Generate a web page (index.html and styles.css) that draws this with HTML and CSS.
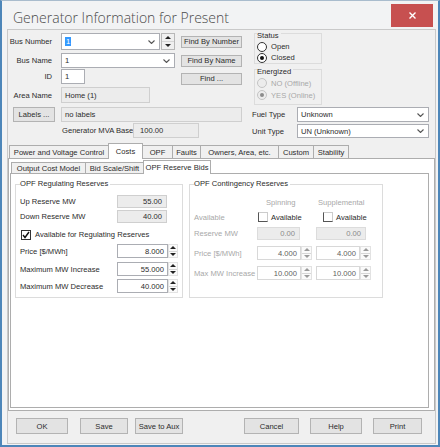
FILE: index.html
```html
<!DOCTYPE html>
<html lang="en">

<head>
  <meta charset="UTF-8">
  <title>Generator Information for Present</title>
  <link rel="stylesheet" href="styles.css">
</head>

<body>
  <div class="window">
    <div class="titlebar">
      <div class="title">Generator Information for Present</div>
      <div class="close">
        <svg width="7" height="7" viewBox="0 0 7 7"><path d="M0.5 0.5 L6.5 6.5 M6.5 0.5 L0.5 6.5" /></svg>
      </div>
    </div>

    <div class="client">
      <!-- bus selection and status -->
      <div class="top">
        <div class="bus-col">
          <div class="row row-num">
            <span class="lbl">Bus Number</span>
            <div class="combo combo-num">
              <span class="val"><span class="sel">1</span></span>
              <svg class="chev" width="7" height="4" viewBox="0 0 7 4"><polyline points="0.5,0.5 3.5,3.5 6.5,0.5" /></svg>
            </div>
            <div class="updown updown-num"><span class="up"></span><span class="down"></span></div>
            <div class="btn btn-find">Find By Number</div>
          </div>
          <div class="row row-name">
            <span class="lbl">Bus Name</span>
            <div class="combo combo-name">
              <span class="val">1</span>
              <svg class="chev" width="7" height="4" viewBox="0 0 7 4"><polyline points="0.5,0.5 3.5,3.5 6.5,0.5" /></svg>
            </div>
            <div class="btn btn-find">Find By Name</div>
          </div>
          <div class="row row-id">
            <span class="lbl">ID</span>
            <div class="edit edit-id">1</div>
            <div class="btn btn-find btn-find-dots">Find ...</div>
          </div>
          <div class="row row-area">
            <span class="lbl">Area Name</span>
            <div class="ro ro-area">Home (1)</div>
          </div>
          <div class="row row-labels">
            <div class="btn btn-labels">Labels ...</div>
            <div class="ro ro-labels">no labels</div>
          </div>
          <div class="row row-mva">
            <span class="lbl-mva">Generator MVA Base</span>
            <div class="ro ro-mva">100.00</div>
          </div>
        </div>

        <div class="state-col">
          <div class="group group-status">
            <div class="cap">Status</div>
            <div class="opt"><span class="radio"></span>Open</div>
            <div class="opt"><span class="radio on"></span>Closed</div>
          </div>
          <div class="group group-energized off">
            <div class="cap">Energized</div>
            <div class="opt"><span class="radio"></span>NO (Offline)</div>
            <div class="opt"><span class="radio on"></span>YES (Online)</div>
          </div>
          <div class="row row-type">
            <span class="lbl-type">Fuel Type</span>
            <div class="combo combo-type">
              <span class="val">Unknown</span>
              <svg class="chev" width="7" height="4" viewBox="0 0 7 4"><polyline points="0.5,0.5 3.5,3.5 6.5,0.5" /></svg>
            </div>
          </div>
          <div class="row row-type row-unit">
            <span class="lbl-type">Unit Type</span>
            <div class="combo combo-type">
              <span class="val">UN (Unknown)</span>
              <svg class="chev" width="7" height="4" viewBox="0 0 7 4"><polyline points="0.5,0.5 3.5,3.5 6.5,0.5" /></svg>
            </div>
          </div>
        </div>
      </div>

      <!-- main tabs -->
      <div class="tabctl">
        <div class="strip">
          <div class="tab t-pvc">Power and Voltage Control</div>
          <div class="tab t-costs active">Costs</div>
          <div class="tab t-opf">OPF</div>
          <div class="tab t-faults">Faults</div>
          <div class="tab t-owners">Owners, Area, etc.</div>
          <div class="tab t-custom">Custom</div>
          <div class="tab t-stab">Stability</div>
        </div>
        <div class="page">
          <div class="substrip">
            <div class="tab st-ocm">Output Cost Model</div>
            <div class="tab st-bid">Bid Scale/Shift</div>
            <div class="tab st-res active">OPF Reserve Bids</div>
          </div>
          <div class="subpage">
            <div class="bids">
              <div class="group group-reg">
                <div class="cap">OPF Regulating Reserves</div>
                <div class="row reg-row reg-up">
                  <span class="lbl-reg">Up Reserve MW</span>
                  <div class="ro ro-val">55.00</div>
                </div>
                <div class="row reg-row reg-down">
                  <span class="lbl-reg">Down Reserve MW</span>
                  <div class="ro ro-val">40.00</div>
                </div>
                <div class="row reg-chk">
                  <span class="check on"><svg width="8" height="8" viewBox="0 0 8 8"><polyline points="1,4 3,6.5 7,1" /></svg></span>
                  Available for Regulating Reserves
                </div>
                <div class="row reg-row reg-price">
                  <span class="lbl-reg">Price [$/MWh]</span>
                  <div class="spin"><div class="box w-reg">8.000</div><div class="updown"><span class="up"></span><span class="down"></span></div></div>
                </div>
                <div class="row reg-row reg-inc">
                  <span class="lbl-reg">Maximum MW Increase</span>
                  <div class="spin"><div class="box w-reg">55.000</div><div class="updown"><span class="up"></span><span class="down"></span></div></div>
                </div>
                <div class="row reg-row reg-dec">
                  <span class="lbl-reg">Maximum MW Decrease</span>
                  <div class="spin"><div class="box w-reg">40.000</div><div class="updown"><span class="up"></span><span class="down"></span></div></div>
                </div>
              </div>

              <div class="group group-cont">
                <div class="cap">OPF Contingency Reserves</div>
                <div class="row cont-head">
                  <span class="lbl-cont"></span>
                  <span class="c1 head-spin">Spinning</span>
                  <span class="c2 head-supp">Supplemental</span>
                </div>
                <div class="row cont-avail">
                  <span class="lbl-cont">Available</span>
                  <span class="c1"><span class="check dis"></span>Available</span>
                  <span class="c2 chk-supp"><span class="check dis"></span>Available</span>
                </div>
                <div class="row cont-mw">
                  <span class="lbl-cont">Reserve MW</span>
                  <span class="c1"><span class="ro ro-dis w-mw1">0.00</span></span>
                  <span class="c2"><span class="ro ro-dis w-mw2">0.00</span></span>
                </div>
                <div class="row cont-price">
                  <span class="lbl-cont">Price [$/MWh]</span>
                  <span class="c1"><span class="spin dis"><span class="box w-cont">4.000</span><span class="updown"><span class="up"></span><span class="down"></span></span></span></span>
                  <span class="c2"><span class="spin dis"><span class="box w-cont">4.000</span><span class="updown"><span class="up"></span><span class="down"></span></span></span></span>
                </div>
                <div class="row cont-inc">
                  <span class="lbl-cont">Max MW Increase</span>
                  <span class="c1"><span class="spin dis"><span class="box w-cont">10.000</span><span class="updown"><span class="up"></span><span class="down"></span></span></span></span>
                  <span class="c2"><span class="spin dis"><span class="box w-cont">10.000</span><span class="updown"><span class="up"></span><span class="down"></span></span></span></span>
                </div>
              </div>
            </div>
          </div>
        </div>
      </div>

      <!-- dialog buttons -->
      <div class="btnbar">
        <div class="btn b-ok">OK</div>
        <div class="btn b-save">Save</div>
        <div class="btn b-aux">Save to Aux</div>
        <div class="btn b-cancel">Cancel</div>
        <div class="btn b-help">Help</div>
        <div class="btn b-print">Print</div>
      </div>
    </div>
  </div>
</body>

</html>
```

FILE: styles.css
```css
:root {
  --face: #f0f0f0;
  --text: #2b2b2b;
  --dim: #a8a8a8;
  --edge: #abadb3;
  --tab-edge: #adadad;
}

* {
  margin: 0;
  padding: 0;
  box-sizing: border-box;
}

body {
  width: 440px;
  height: 447px;
  overflow: hidden;
  font-family: 'Liberation Sans', Arial, sans-serif;
  font-size: 7.6px;
  color: var(--text);
  background: #fff;
  white-space: nowrap;
}

.window {
  width: 440px;
  height: 447px;
  background: #f2f3f4;
  border: 2px solid #4d86b9;
  border-top: 1px solid #a9bccd;
}

/* caption */
.titlebar {
  height: 28px;
  display: flex;
  align-items: center;
  justify-content: space-between;
  padding: 0 5px 0 11px;
}

.title {
  font-family: 'Open Sans', sans-serif;
  font-size: 14px;
  font-weight: 300;
  color: #4a4a4a;
  padding-top: 4px;
}

.close {
  width: 42px;
  height: 23px;
  background: #c75050;
  display: flex;
  align-items: center;
  justify-content: center;
}

.close path {
  stroke: #fff;
  stroke-width: 1.4;
}

.client {
  height: 415px;
  margin: 0 2px 1px 5px;
  border: 1px solid #c9c9c9;
  background: var(--face);
}

/* shared controls */
.row {
  display: flex;
  align-items: center;
}

.lbl {
  width: 44px;
  margin-right: 9px;
  text-align: right;
}

.btn {
  display: flex;
  align-items: center;
  justify-content: center;
  background: #e3e3e3;
  border: 1px solid #b3b3b3;
}

.combo {
  display: flex;
  align-items: center;
  height: 100%;
  background: #fff;
  border: 1px solid var(--edge);
  padding: 0 4px 0 3px;
}

.combo .val {
  flex: 1;
}

.chev polyline {
  fill: none;
  stroke: #555;
  stroke-width: 1.1;
}

.sel {
  background: #3399ff;
  color: #fff;
  padding: 0 1px;
}

.edit {
  height: 100%;
  background: #fff;
  border: 1px solid var(--edge);
  padding-left: 3px;
  display: flex;
  align-items: center;
}

.ro {
  height: 100%;
  background: #ececec;
  border: 1px solid #cfcfcf;
  padding-left: 3px;
  display: flex;
  align-items: center;
}

.updown {
  display: flex;
  flex-direction: column;
  border: 1px solid #d2d2d2;
  background: #f6f6f6;
}

.updown span {
  flex: 1;
  display: flex;
  align-items: center;
  justify-content: center;
}

.updown span + span {
  border-top: 1px solid #d6d6d6;
}

.up::before,
.down::before {
  content: '';
  border-left: 3px solid transparent;
  border-right: 3px solid transparent;
}

.up::before {
  border-bottom: 3px solid #222;
}

.down::before {
  border-top: 3px solid #222;
}

/* bus column */
.top {
  display: flex;
  height: 109px;
}

.bus-col {
  width: 234px;
}

.row-num {
  height: 17px;
  margin-top: 3px;
}

.combo-num {
  width: 99px;
}

.updown-num {
  width: 14px;
  height: 100%;
  margin-left: 1px;
  border-color: #b8b8b8;
  background: #f0f0f0;
}

.btn-find {
  width: 61px;
  height: 12px;
  margin-left: 6px;
}

.row-name {
  height: 15px;
  margin-top: 3px;
}

.combo-name {
  width: 114px;
}

.row-id {
  height: 15px;
  margin-top: 1px;
}

.edit-id {
  width: 24px;
}

.btn-find-dots {
  margin-left: 96px;
  margin-top: 4px;
}

.row-area {
  height: 16px;
  margin-top: 3px;
}

.ro-area {
  width: 89px;
}

.row-labels {
  height: 15px;
  margin-top: 4px;
}

.btn-labels {
  width: 42px;
  height: 100%;
  margin: 0 6px 0 5px;
}

.ro-labels {
  width: 181px;
}

.row-mva {
  height: 15px;
  margin-top: 1px;
  padding-left: 54px;
}

.lbl-mva {
  width: 71px;
}

.ro-mva {
  width: 66px;
  padding-left: 6px;
}

/* status column */
.state-col {
  width: 178px;
  margin-left: 10px;
}

.group {
  border: 1px solid #dcdcdc;
}

.cap {
  width: max-content;
  line-height: 10px;
  background: var(--face);
  padding-right: 2px;
}

.group-status,
.group-energized {
  width: 68px;
  margin-left: 2px;
  padding-left: 2px;
}

.group-status {
  height: 31px;
  margin-top: 3px;
}

.group-status .cap {
  margin-top: -3px;
}

.group-energized {
  height: 36px;
  margin-top: 5px;
}

.group-energized .cap {
  margin-top: -3px;
}

.opt {
  display: flex;
  align-items: center;
  height: 11px;
}

.group-energized .opt {
  height: 12px;
}

.radio {
  width: 10px;
  height: 10px;
  margin-right: 4px;
  border: 1px solid #333;
  border-radius: 50%;
  background: #fff;
  display: flex;
  align-items: center;
  justify-content: center;
}

.radio.on::after {
  content: '';
  width: 4px;
  height: 4px;
  border-radius: 50%;
  background: #111;
}

.off .opt {
  color: var(--dim);
}

.off .radio {
  border-color: #c4c4c4;
  background: #ececec;
}

.off .radio.on::after {
  background: #8c8c8c;
}

.row-type {
  height: 15px;
  margin-top: 2px;
}

.row-unit {
  height: 14px;
}

.lbl-type {
  width: 45px;
}

.combo-type {
  width: 132px;
}

/* tabs */
.tabctl {
  margin-top: 4px;
  height: 268px;
}

.strip,
.substrip {
  display: flex;
  align-items: flex-end;
}

.strip {
  height: 15px;
  padding-left: 1px;
}

.tab {
  height: 13px;
  margin-right: -1px;
  display: flex;
  align-items: center;
  justify-content: center;
  border: 1px solid var(--tab-edge);
  border-bottom: none;
  background: #f0f0f0;
}

.tab.active {
  position: relative;
  z-index: 1;
  height: 16px;
  margin-bottom: -1px;
  background: #fff;
}

.t-pvc { width: 100px; }
.t-costs { width: 35px; }
.t-opf { width: 31px; }
.t-faults { width: 29px; }
.t-owners { width: 79px; }
.t-custom { width: 36px; }
.t-stab { width: 36px; }

.page {
  height: 253px;
  border: 1px solid var(--tab-edge);
  background: #fff;
  padding-top: 1px;
}

.substrip {
  height: 13px;
  margin-left: 1px;
  padding-left: 1px;
}

.substrip .tab {
  height: 11px;
}

.substrip .tab.active {
  height: 14px;
}

.st-ocm { width: 75px; }
.st-bid { width: 59px; }
.st-res { width: 68px; }

.subpage {
  width: 419px;
  height: 235px;
  margin-left: 1px;
  border: 1px solid var(--tab-edge);
  background: #fff;
}

.bids {
  display: flex;
  padding: 10px 0 0 4px;
}

.bids .cap {
  background: #fff;
  margin-top: -6px;
}

.group-reg {
  width: 168px;
  height: 114px;
  padding-left: 4px;
}

.group-cont {
  width: 194px;
  height: 114px;
  margin-left: 6px;
  padding-left: 4px;
}

.reg-row {
  height: 14px;
}

.lbl-reg {
  width: 97px;
}

.ro-val {
  width: 50px;
  justify-content: flex-end;
  padding-right: 4px;
}

.reg-up {
  height: 13px;
  margin-top: 6px;
}

.reg-down {
  height: 13px;
  margin-top: 2px;
}

.reg-chk {
  height: 11px;
  margin-top: 6px;
  padding-left: 1px;
}

.reg-price { margin-top: 4px; }
.reg-inc { margin-top: 4px; }
.reg-dec { margin-top: 3px; }

.check {
  width: 10px;
  height: 10px;
  margin-right: 4px;
  border: 1px solid #333;
  background: #fff;
  display: inline-flex;
  align-items: center;
  justify-content: center;
}

.check polyline {
  fill: none;
  stroke: #111;
  stroke-width: 1.4;
}

.check.dis {
  border-color: #ccc #ccc #555 #555;
  margin-right: 3px;
}

.spin {
  display: flex;
  height: 100%;
}

.spin .box {
  height: 100%;
  background: #fff;
  border: 1px solid var(--edge);
  display: flex;
  align-items: center;
  justify-content: flex-end;
  padding-right: 3px;
}

.spin .updown {
  width: 10px;
  border-color: #e2e2e2;
  background: #fafafa;
}

.w-reg { width: 51px; }

/* contingency grid */
.lbl-cont {
  width: 63px;
  color: var(--dim);
}

.c1 {
  width: 59px;
  display: flex;
  align-items: center;
  height: 100%;
}

.c2 {
  display: flex;
  align-items: center;
  height: 100%;
}

.cont-head {
  height: 10px;
  margin-top: 8px;
  color: var(--dim);
}

.head-spin { padding-left: 9px; }
.head-supp { padding-left: 2px; }

.cont-avail {
  height: 12px;
  margin-top: 4px;
}

.cont-avail .c1 {
  padding-left: 1px;
}

.chk-supp {
  padding-left: 7px;
}

.cont-mw {
  height: 13px;
  margin-top: 4px;
}

.ro-dis {
  justify-content: flex-end;
  padding-right: 4px;
  color: #8a8a8a;
  border-color: #dcdcdc;
}

.w-mw1 { width: 43px; }
.w-mw2 { width: 50px; }

.cont-price {
  height: 14px;
  margin-top: 6px;
}

.cont-inc {
  height: 14px;
  margin-top: 6px;
}

.spin.dis .box {
  border-color: #d8d8d8;
  color: #5e5e5e;
}

.spin.dis .updown {
  width: 11px;
}

.spin.dis .up::before {
  border-bottom-color: #9a9a9a;
}

.spin.dis .down::before {
  border-top-color: #9a9a9a;
}

.w-cont { width: 44px; }

/* dialog buttons */
.btnbar {
  display: flex;
  padding: 7px 0 0 8px;
}

.btnbar .btn {
  height: 16px;
}

.b-ok { width: 52px; }
.b-save { width: 48px; margin-left: 12px; }
.b-aux { width: 48px; margin-left: 7px; }
.b-cancel { width: 55px; margin-left: 61px; }
.b-help { width: 52px; margin-left: 11px; }
.b-print { width: 49px; margin-left: 11px; }
```
